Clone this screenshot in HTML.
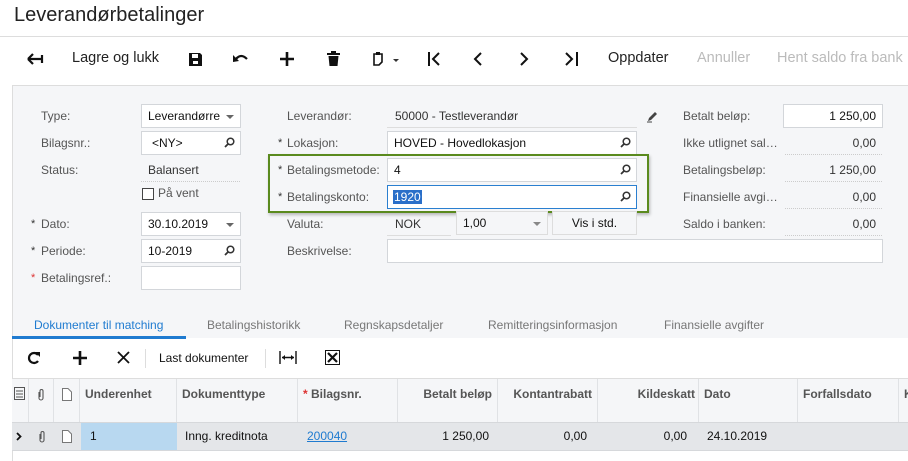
<!DOCTYPE html>
<html><head><meta charset="utf-8"><style>
*{margin:0;padding:0;box-sizing:border-box}
body{width:908px;height:461px;overflow:hidden;background:#fff;font-family:"Liberation Sans",Arial,sans-serif;color:#222;position:relative}
.a{position:absolute;white-space:nowrap}
.lbl{font-size:12px;color:#555}
.inp{position:absolute;background:#fff;border:1px solid #d3d6da;height:24px;font-size:12px;padding:4px 0 0 6px;color:#111}
.st{color:#333;font-size:12px;position:absolute}
.ast{position:absolute;font-size:11px;color:#333}
.mag{position:absolute;right:5px;top:5px;width:11px;height:11px}
.dd{position:absolute;right:6px;top:10px;border-left:4px solid transparent;border-right:4px solid transparent;border-top:4px solid #666}
.tb{position:absolute;top:50px;font-size:14.5px}
.hdr{position:absolute;top:379px;height:43px;font-size:12px;font-weight:bold;color:#555;padding:8px 5px;border-right:1px solid #e0e2e5}
.cell{position:absolute;top:422px;height:28px;font-size:12px;color:#111;padding:7px 5px}
.dot{position:absolute;border-bottom:1px dotted #ccc}
</style></head><body>
<div class="a" style="left:14px;top:4px;font-size:20px;color:#222">Leverandørbetalinger</div>
<div class="a" style="left:0;top:36px;width:908px;height:1px;background:#ddd"></div>

<!-- toolbar -->
<svg class="a" style="left:26px;top:52px" width="18" height="14"><path d="M2 7H16M2 7L7 2M2 7L7 12M16 3V11" stroke="#111" stroke-width="2.2" fill="none"/></svg>
<div class="tb" style="left:72px">Lagre og lukk</div>
<svg class="a" style="left:188px;top:52px" width="15" height="15"><path d="M1 1H12L14 3V14H1Z" fill="#111"/><rect x="4" y="2" width="6" height="4" fill="#fff"/><rect x="5" y="9" width="5" height="3" fill="#fff"/></svg>
<svg class="a" style="left:233px;top:52px" width="16" height="12"><path d="M3 7Q8 1 14 7" stroke="#111" stroke-width="2.2" fill="none"/><path d="M0 3L6 9L0 10Z" fill="#111"/></svg>
<svg class="a" style="left:280px;top:52px" width="14" height="14"><path d="M7 0V14M0 7H14" stroke="#111" stroke-width="2.6"/></svg>
<svg class="a" style="left:327px;top:51px" width="13" height="15"><rect x="0" y="2" width="13" height="2" fill="#111"/><rect x="4" y="0" width="5" height="2" fill="#111"/><path d="M1.5 5H11.5L10.5 15H2.5Z" fill="#111"/></svg>
<svg class="a" style="left:372px;top:51px" width="30" height="16"><path d="M2 3H10V11L7 14H2Z" stroke="#111" stroke-width="1.6" fill="none"/><rect x="4" y="1" width="4" height="3" fill="#111"/><path d="M21 8H27L24 11Z" fill="#333"/></svg>
<svg class="a" style="left:427px;top:52px" width="14" height="14"><path d="M2 0V14M12 1L6 7L12 13" stroke="#111" stroke-width="2" fill="none"/></svg>
<svg class="a" style="left:473px;top:52px" width="10" height="14"><path d="M8 1L2 7L8 13" stroke="#111" stroke-width="2" fill="none"/></svg>
<svg class="a" style="left:519px;top:52px" width="10" height="14"><path d="M2 1L8 7L2 13" stroke="#111" stroke-width="2" fill="none"/></svg>
<svg class="a" style="left:564px;top:52px" width="16" height="14"><path d="M2 1L8 7L2 13M13 0V14" stroke="#111" stroke-width="2" fill="none"/></svg>
<div class="tb" style="left:608px">Oppdater</div>
<div class="tb" style="left:697px;color:#bbb">Annuller</div>
<div class="tb" style="left:777px;color:#bbb">Hent saldo fra bank</div>

<!-- form area -->
<div class="a" style="left:12px;top:85px;width:896px;height:376px;background:#f5f6f8;border-left:1px solid #ddd;border-top:1px solid #ddd"></div>

<div class="a lbl" style="left:41px;top:109px">Type:</div>
<div class="inp" style="left:141px;top:104px;width:100px">Leverandørre<div class="dd"></div></div>
<div class="a lbl" style="left:41px;top:136px">Bilagsnr.:</div>
<div class="inp" style="left:141px;top:131px;width:100px;padding-left:10px">&lt;NY&gt;<svg class="mag" viewBox="0 0 11 11"><circle cx="6.5" cy="4.5" r="3.3" stroke="#333" stroke-width="1.5" fill="none"/><path d="M4 7L1 10" stroke="#333" stroke-width="1.8"/></svg></div>
<div class="a lbl" style="left:41px;top:163px">Status:</div>
<div class="st" style="left:148px;top:163px">Balansert</div>
<div class="dot" style="left:141px;top:181px;width:99px"></div>
<div class="a" style="left:142px;top:188px;width:12px;height:12px;border:1px solid #444;background:#fff"></div>
<div class="a lbl" style="left:158px;top:186px">På vent</div>
<div class="ast" style="left:31px;top:218px">*</div><div class="a lbl" style="left:41px;top:217px">Dato:</div>
<div class="inp" style="left:141px;top:212px;width:100px">30.10.2019<div class="dd"></div></div>
<div class="ast" style="left:31px;top:245px">*</div><div class="a lbl" style="left:41px;top:244px">Periode:</div>
<div class="inp" style="left:141px;top:239px;width:100px">10-2019<svg class="mag" viewBox="0 0 11 11"><circle cx="6.5" cy="4.5" r="3.3" stroke="#333" stroke-width="1.5" fill="none"/><path d="M4 7L1 10" stroke="#333" stroke-width="1.8"/></svg></div>
<div class="ast" style="left:31px;top:272px;color:#d33">*</div><div class="a lbl" style="left:41px;top:271px">Betalingsref.:</div>
<div class="inp" style="left:141px;top:266px;width:100px"></div>

<div class="a lbl" style="left:287px;top:109px">Leverandør:</div>
<div class="st" style="left:395px;top:109px">50000 - Testleverandør</div>
<div class="a" style="left:387px;top:127px;width:250px;height:1px;background:#ddd"></div>
<svg class="a" style="left:646px;top:110px" width="13" height="13"><path d="M2 11L3 8L9 2L11 4L5 10Z" fill="#444"/><path d="M1 12H6" stroke="#444"/></svg>
<div class="ast" style="left:278px;top:137px">*</div><div class="a lbl" style="left:287px;top:136px">Lokasjon:</div>
<div class="inp" style="left:387px;top:131px;width:250px">HOVED - Hovedlokasjon<svg class="mag" viewBox="0 0 11 11"><circle cx="6.5" cy="4.5" r="3.3" stroke="#333" stroke-width="1.5" fill="none"/><path d="M4 7L1 10" stroke="#333" stroke-width="1.8"/></svg></div>
<div class="ast" style="left:278px;top:164px">*</div><div class="a lbl" style="left:287px;top:163px">Betalingsmetode:</div>
<div class="inp" style="left:387px;top:158px;width:250px">4<svg class="mag" viewBox="0 0 11 11"><circle cx="6.5" cy="4.5" r="3.3" stroke="#333" stroke-width="1.5" fill="none"/><path d="M4 7L1 10" stroke="#333" stroke-width="1.8"/></svg></div>
<div class="ast" style="left:278px;top:191px">*</div><div class="a lbl" style="left:287px;top:190px">Betalingskonto:</div>
<div class="inp" style="left:387px;top:185px;width:250px;border-color:#2a7fd0;padding-left:5px"><span style="background:#2a6fc9;color:#fff;padding:0 1px">1920</span><svg class="mag" viewBox="0 0 11 11"><circle cx="6.5" cy="4.5" r="3.3" stroke="#333" stroke-width="1.5" fill="none"/><path d="M4 7L1 10" stroke="#333" stroke-width="1.8"/></svg></div>
<div class="a" style="left:268px;top:154px;width:381px;height:59px;border:2px solid #5a8a1e;box-shadow:1px 2px 3px rgba(0,0,0,.25)"></div>
<div class="a lbl" style="left:287px;top:217px">Valuta:</div>
<div class="st" style="left:395px;top:217px">NOK</div>
<div class="a" style="left:387px;top:235px;width:64px;height:1px;background:#ddd"></div>
<div class="inp" style="left:456px;top:211px;width:92px;background:#f5f6f8;border-color:#ddd">1,00<div class="dd" style="border-top-color:#888"></div></div>
<div class="inp" style="left:552px;top:211px;width:85px;background:#f5f6f8;border-color:#ddd;text-align:center;padding-left:0">Vis i std.</div>
<div class="a lbl" style="left:287px;top:244px">Beskrivelse:</div>
<div class="inp" style="left:387px;top:239px;width:496px"></div>

<div class="a lbl" style="left:683px;top:109px">Betalt beløp:</div>
<div class="inp" style="left:783px;top:104px;width:100px;text-align:right;padding-right:6px">1 250,00</div>
<div class="a lbl" style="left:683px;top:136px">Ikke utlignet sal…</div>
<div class="st" style="left:783px;width:93px;text-align:right;top:136px">0,00</div>
<div class="dot" style="left:785px;top:154px;width:97px"></div>
<div class="a lbl" style="left:683px;top:163px">Betalingsbeløp:</div>
<div class="st" style="left:783px;width:93px;text-align:right;top:163px">1 250,00</div>
<div class="dot" style="left:785px;top:181px;width:97px"></div>
<div class="a lbl" style="left:683px;top:190px">Finansielle avgi…</div>
<div class="st" style="left:783px;width:93px;text-align:right;top:190px">0,00</div>
<div class="dot" style="left:785px;top:208px;width:97px"></div>
<div class="a lbl" style="left:683px;top:217px">Saldo i banken:</div>
<div class="st" style="left:783px;width:93px;text-align:right;top:217px">0,00</div>
<div class="dot" style="left:785px;top:235px;width:97px"></div>

<!-- tabs -->
<div class="a" style="left:34px;top:318px;font-size:12px;color:#1f7bd0">Dokumenter til matching</div>
<div class="a" style="left:207px;top:318px;font-size:12px;color:#777">Betalingshistorikk</div>
<div class="a" style="left:344px;top:318px;font-size:12px;color:#777">Regnskapsdetaljer</div>
<div class="a" style="left:488px;top:318px;font-size:12px;color:#777">Remitteringsinformasjon</div>
<div class="a" style="left:664px;top:318px;font-size:12px;color:#777">Finansielle avgifter</div>
<div class="a" style="left:12px;top:338px;width:896px;height:123px;background:#fff;border-left:1px solid #ddd"></div>
<div class="a" style="left:12px;top:336px;width:174px;height:3px;background:#1f7bd0"></div>

<!-- grid toolbar -->
<svg class="a" style="left:27px;top:351px" width="14" height="14"><path d="M11 4A5 5 0 1 0 11 10" stroke="#111" stroke-width="2.2" fill="none"/><path d="M8 1H13V6Z" fill="#111"/></svg>
<svg class="a" style="left:73px;top:351px" width="14" height="14"><path d="M7 0V14M0 7H14" stroke="#111" stroke-width="2.6"/></svg>
<svg class="a" style="left:117px;top:351px" width="13" height="13"><path d="M1 1L12 12M12 1L1 12" stroke="#111" stroke-width="1.8"/></svg>
<div class="a" style="left:145px;top:349px;width:1px;height:19px;background:#ddd"></div>
<div class="a" style="left:159px;top:351px;font-size:12px;color:#111">Last dokumenter</div>
<div class="a" style="left:265px;top:349px;width:1px;height:19px;background:#ddd"></div>
<svg class="a" style="left:279px;top:350px" width="18" height="15"><path d="M1 1V14M17 1V14M3 7.5H15" stroke="#111" stroke-width="1.4"/><path d="M3 7.5L6 5V10ZM15 7.5L12 5V10Z" fill="#111"/></svg>
<svg class="a" style="left:325px;top:350px" width="15" height="15"><rect x="0.5" y="0.5" width="14" height="14" fill="#fff" stroke="#111"/><path d="M3 3L12 12M12 3L3 12" stroke="#111" stroke-width="2.2"/></svg>

<!-- grid -->
<div class="a" style="left:12px;top:378px;width:896px;height:1px;background:#ddd"></div>
<div class="a" style="left:12px;top:379px;width:896px;height:43px;background:#f5f6f8"></div>
<div class="a" style="left:12px;top:422px;width:896px;height:29px;background:#e4e6e9;border-top:1px solid #d6d8db;border-bottom:1px solid #d6d8db"></div>
<div class="hdr" style="left:12px;width:17px;padding:8px 2px"><svg width="11" height="13"><rect x="0.5" y="0.5" width="10" height="12" fill="none" stroke="#555"/><path d="M2 4H9M2 7H9M2 10H9" stroke="#555"/></svg></div>
<div class="hdr" style="left:29px;width:25px;padding:9px 8px"><svg width="8" height="13"><path d="M2 4V10A2 2 0 0 0 6 10V3A1.5 1.5 0 0 0 3 3V9" stroke="#555" fill="none" stroke-width="1.1"/></svg></div>
<div class="hdr" style="left:54px;width:26px;padding:9px 8px"><svg width="10" height="13"><path d="M0.5 0.5H6L9.5 4V12.5H0.5Z" fill="#fff" stroke="#777"/></svg></div>
<div class="hdr" style="left:80px;width:97px">Underenhet</div>
<div class="hdr" style="left:177px;width:121px">Dokumenttype</div>
<div class="hdr" style="left:298px;width:100px"><span style="color:#d33">*</span> Bilagsnr.</div>
<div class="hdr" style="left:398px;width:100px;text-align:right">Betalt beløp</div>
<div class="hdr" style="left:498px;width:100px;text-align:right;overflow:hidden">Kontantrabatt</div>
<div class="hdr" style="left:598px;width:101px;text-align:right;padding-right:3px">Kildeskatt</div>
<div class="hdr" style="left:699px;width:99px">Dato</div>
<div class="hdr" style="left:798px;width:101px">Forfallsdato</div>
<div class="hdr" style="left:899px;width:20px;border:none">K</div>

<svg class="a" style="left:16px;top:432px" width="6" height="9"><path d="M1 1L4.5 4.5L1 8" stroke="#111" stroke-width="1.8" fill="none"/></svg>
<svg class="a" style="left:38px;top:430px" width="8" height="13"><path d="M2 4V10A2 2 0 0 0 6 10V3A1.5 1.5 0 0 0 3 3V9" stroke="#555" fill="none" stroke-width="1.1"/></svg>
<svg class="a" style="left:62px;top:430px" width="10" height="13"><path d="M0.5 0.5H6L9.5 4V12.5H0.5Z" fill="#fff" stroke="#777"/></svg>
<div class="a" style="left:81px;top:423px;width:96px;height:27px;background:#b8d8f0"></div>
<div class="cell" style="left:85px">1</div>
<div class="cell" style="left:180px">Inng. kreditnota</div>
<div class="cell" style="left:302px;color:#1f7bd0;text-decoration:underline">200040</div>
<div class="cell" style="left:398px;width:96px;text-align:right">1 250,00</div>
<div class="cell" style="left:498px;width:94px;text-align:right">0,00</div>
<div class="cell" style="left:598px;width:94px;text-align:right">0,00</div>
<div class="cell" style="left:702px">24.10.2019</div>
</body></html>
